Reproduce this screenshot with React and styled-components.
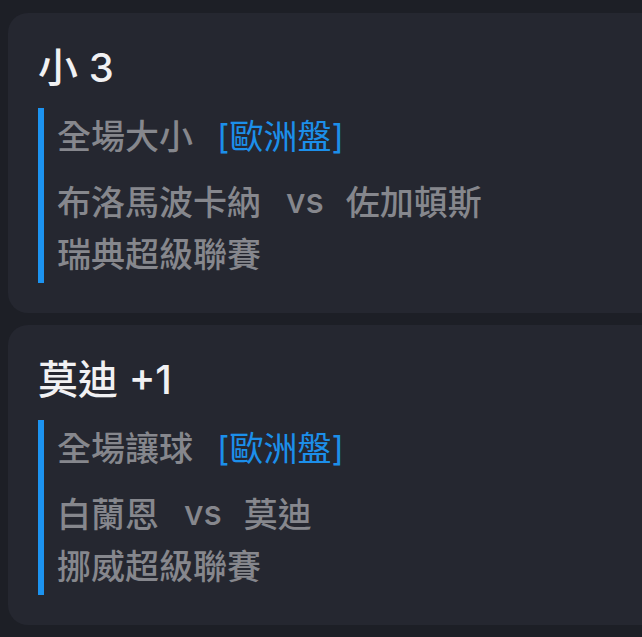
import React from "react";
import styled, { createGlobalStyle } from "styled-components";

const GlobalStyle = createGlobalStyle`
  html, body {
    margin: 0;
    padding: 0;
    background: #1d1f26;
    overflow: hidden;
  }
  body {
    font-family: Inter, "Noto Sans CJK TC", sans-serif;
  }
`;

const Page = styled.div`
  display: flex;
  flex-direction: column;
  gap: 12px;
  width: 700px;
  padding: 13px 0 0 8px;
`;

const Card = styled.div`
  background: #252730;
  border-radius: 20px;
  padding: 29px 30px 30px;
`;

const Title = styled.div`
  color: #f1f1f3;
  font-size: 40px;
  font-weight: 500;
  line-height: 52px;
  margin-bottom: 14px;
`;

const Info = styled.div`
  border-left: 6px solid #1c93f0;
  padding: 0 0 5px 13px;
  color: #86878d;
  font-size: 34px;
  font-weight: 500;
`;

const Row = styled.div`
  display: flex;
  align-items: center;
  height: 52px;
  white-space: nowrap;
  margin-bottom: ${(p) => (p.$gap ? "14px" : "0")};
`;

const Tag = styled.span`
  color: #1c8fea;
  font-weight: 400;
  margin-left: 24px;
`;

const Vs = styled.span`
  margin: 0 22px 0 25px;
`;

const bets = [
  {
    pick: "小 3",
    market: "全場大小",
    home: "布洛馬波卡納",
    away: "佐加頓斯",
    league: "瑞典超級聯賽",
  },
  {
    pick: "莫迪 +1",
    market: "全場讓球",
    home: "白蘭恩",
    away: "莫迪",
    league: "挪威超級聯賽",
  },
];

export default function App() {
  return (
    <>
      <GlobalStyle />
      <Page>
        {bets.map((b) => (
          <Card key={b.pick}>
            <Title>{b.pick}</Title>
            <Info>
              <Row $gap>
                {b.market}
                <Tag>[歐洲盤]</Tag>
              </Row>
              <Row>
                {b.home}
                <Vs>vs</Vs>
                {b.away}
              </Row>
              <Row>{b.league}</Row>
            </Info>
          </Card>
        ))}
      </Page>
    </>
  );
}
